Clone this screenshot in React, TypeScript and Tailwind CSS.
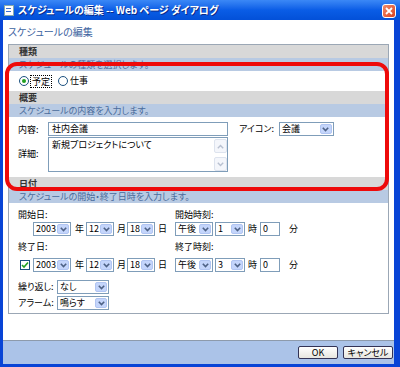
import React from "react";

const jp = "font-['Noto_Sans_CJK_JP',sans-serif] [font-feature-settings:'palt']";

function Arrow() {
  return (
    <span className="w-[12px] my-[1px] mr-[1px] bg-[#c4d5fb] border border-[#b1c5f2] rounded-[2px] flex items-center justify-center shrink-0">
      <svg width="7" height="5" viewBox="0 0 7 5">
        <path d="M0.8 0.8 L3.5 3.5 L6.2 0.8" stroke="#4d6185" strokeWidth="1.6" fill="none" />
      </svg>
    </span>
  );
}

function Select({ value, w }: { value: string; w: string }) {
  return (
    <div className={`${w} h-[14px] border border-[#7f9db9] bg-white flex items-stretch shrink-0`}>
      <span className="flex-1 pl-[2px] text-[9px] leading-[12px] text-black whitespace-nowrap">{value}</span>
      <Arrow />
    </div>
  );
}

function SectionHead({ title, desc }: { title: string; desc: string }) {
  return (
    <>
      <div className="h-[13px] shrink-0 bg-[#d8d8d8] pl-[10px] text-[9px] leading-[13px] font-bold text-[#333]">{title}</div>
      <div className="h-[13px] shrink-0 bg-[#b8cae3] pl-[10px] text-[9px] leading-[13px] text-[#4a6c9c]">{desc}</div>
    </>
  );
}

function ScrollBtn({ up }: { up?: boolean }) {
  return (
    <span className="h-[14px] w-[13px] bg-[#f4f6fb] border border-[#dde3ee] rounded-[2px] flex items-center justify-center">
      <svg width="7" height="5" viewBox="0 0 7 5">
        <path d={up ? "M0.8 4.2 L3.5 1.5 L6.2 4.2" : "M0.8 0.8 L3.5 3.5 L6.2 0.8"} stroke="#b8c0d0" strokeWidth="1.4" fill="none" />
      </svg>
    </span>
  );
}

function DateRow({ hour, check }: { hour: string; check?: boolean }) {
  return (
    <div className="flex items-center h-[14px]">
      <div className={`w-[157px] flex items-center ${check ? "pl-[2px]" : "pl-[15px]"}`}>
        {check && (
          <span className="w-[10px] h-[10px] border border-[#1c5180] bg-white flex items-center justify-center mr-[3px]">
            <svg width="8" height="8" viewBox="0 0 8 8">
              <path d="M1 4 L3 6 L7 1.5" stroke="#21a121" strokeWidth="1.6" fill="none" />
            </svg>
          </span>
        )}
        <Select value="2003" w="w-[38px]" />
        <span className="ml-[4px] mr-[2px]">年</span>
        <Select value="12" w="w-[28px]" />
        <span className="ml-[3px] mr-[1px]">月</span>
        <Select value="18" w="w-[28px]" />
        <span className="ml-[3px]">日</span>
      </div>
      <Select value="午後" w="w-[38px]" />
      <span className="w-[2px]" />
      <Select value={hour} w="w-[30px]" />
      <span className="mx-[3px]">時</span>
      <div className="w-[20px] h-[14px] border border-[#7f9db9] pl-[2px] leading-[12px]">0</div>
      <span className="ml-[9px]">分</span>
    </div>
  );
}

export default function App() {
  return (
    <div className={`w-[400px] h-[367px] bg-[#0844d6] flex flex-col relative overflow-hidden ${jp}`}>
      {/* title bar */}
      <div className="h-[20px] bg-gradient-to-b from-[#3b88f6] via-[#0a5de6] to-[#0350d8] flex items-center pl-[4px] pr-[4px] shrink-0">
        <div className="w-[10px] h-[11px] bg-white border border-[#8aa] mr-[4px] relative">
          <div className="absolute left-[1px] top-[2px] w-[5px] h-[1px] bg-[#3a6fd0]" />
          <div className="absolute left-[1px] top-[5px] w-[5px] h-[1px] bg-[#3a6fd0]" />
        </div>
        <span className="text-white font-bold text-[10px] leading-[20px] [text-shadow:1px_1px_0_#0a2a88]">
          スケジュールの編集 -- Web ページ ダイアログ
        </span>
        <div className="ml-auto w-[14px] h-[14px] mt-[1px] rounded-[3px] border border-white bg-gradient-to-br from-[#f08a6a] to-[#d9401c] flex items-center justify-center">
          <svg width="8" height="8" viewBox="0 0 8 8">
            <path d="M1 1 L7 7 M7 1 L1 7" stroke="white" strokeWidth="1.8" />
          </svg>
        </div>
      </div>

      {/* client area */}
      <div className="flex-1 ml-[3px] mr-[6px] mb-[3px] bg-white flex flex-col">
        <div className="flex-1 px-[5px] flex flex-col">
          <div className="h-[24px] shrink-0 pt-[6px] text-[10px] leading-[12px] text-[#3c63a0]">スケジュールの編集</div>
          <div className="border border-[#9ba7b5] h-[270px] shrink-0 flex flex-col">
            <SectionHead title="種類" desc="スケジュールの種類を選択します。" />
            <div className="h-[20px] shrink-0 flex items-center pl-[10px] text-[9px] text-black">
              <span className="w-[10px] h-[10px] rounded-full border border-[#1c5180] bg-white flex items-center justify-center mr-[1px]">
                <span className="w-[4px] h-[4px] rounded-full bg-[#21a121]" />
              </span>
              <span className="border border-dotted border-black px-[1px] leading-[11px]">予定</span>
              <span className="w-[10px] h-[10px] rounded-full border border-[#1c5180] bg-white ml-[6px] mr-[2px]" />
              <span>仕事</span>
            </div>
            <SectionHead title="概要" desc="スケジュールの内容を入力します。" />
            <div className="h-[60px] shrink-0 pl-[9px] pt-[5px] text-[9px] text-black flex">
              <div className="w-[30px] flex flex-col">
                <span className="h-[15px] leading-[15px]">内容:</span>
                <span className="h-[34px] leading-[34px]">詳細:</span>
              </div>
              <div className="w-[180px] flex flex-col">
                <div className="h-[14px] border border-[#7f9db9] pl-[3px] leading-[12px]">社内会議</div>
                <div className="h-[35px] mt-[1px] border border-[#7f9db9] pl-[3px] pt-[1px] flex">
                  <span className="flex-1 leading-[12px]">新規プロジェクトについて</span>
                  <div className="flex flex-col justify-between">
                    <ScrollBtn up />
                    <ScrollBtn />
                  </div>
                </div>
              </div>
              <span className="ml-[11px] h-[14px] leading-[14px]">アイコン:</span>
              <div className="ml-[5px]">
                <Select value="会議" w="w-[55px]" />
              </div>
            </div>
            <SectionHead title="日付" desc="スケジュールの開始・終了日時を入力します。" />
            <div className="flex-1 pl-[9px] pt-[6px] text-[9px] text-black">
              <div className="flex h-[12px] leading-[12px]">
                <span className="w-[157px]">開始日:</span>
                <span>開始時刻:</span>
              </div>
              <div className="mt-[1px]">
                <DateRow hour="1" />
              </div>
              <div className="flex h-[12px] leading-[12px] mt-[5px]">
                <span className="w-[157px]">終了日:</span>
                <span>終了時刻:</span>
              </div>
              <div className="mt-[5px]">
                <DateRow hour="3" check />
              </div>
              <div className="flex items-center h-[14px] mt-[8px]">
                <span className="w-[39px]">繰り返し:</span>
                <Select value="なし" w="w-[52px]" />
              </div>
              <div className="flex items-center h-[14px] mt-[2px]">
                <span className="w-[39px]">アラーム:</span>
                <Select value="鳴らす" w="w-[52px]" />
              </div>
            </div>
          </div>
        </div>
        {/* footer */}
        <div className="h-[24px] border-t border-[#8d9aab] bg-[#abc3e8] flex items-center justify-end pr-[1px] gap-[5px] shrink-0">
          <button className="w-[40px] h-[13px] border border-[#335] rounded-[2px] bg-gradient-to-b from-white to-[#e7e6df] text-[9px] leading-[11px] text-black">OK</button>
          <button className="w-[50px] h-[13px] border border-[#335] rounded-[2px] bg-gradient-to-b from-white to-[#e7e6df] text-[9px] leading-[11px] text-black">キャンセル</button>
        </div>
      </div>

      {/* red annotation */}
      <div className="absolute left-[5px] top-[62px] w-[384px] h-[129px] border-[4px] border-[#ee0a0a] rounded-[12px] pointer-events-none" />
    </div>
  );
}
